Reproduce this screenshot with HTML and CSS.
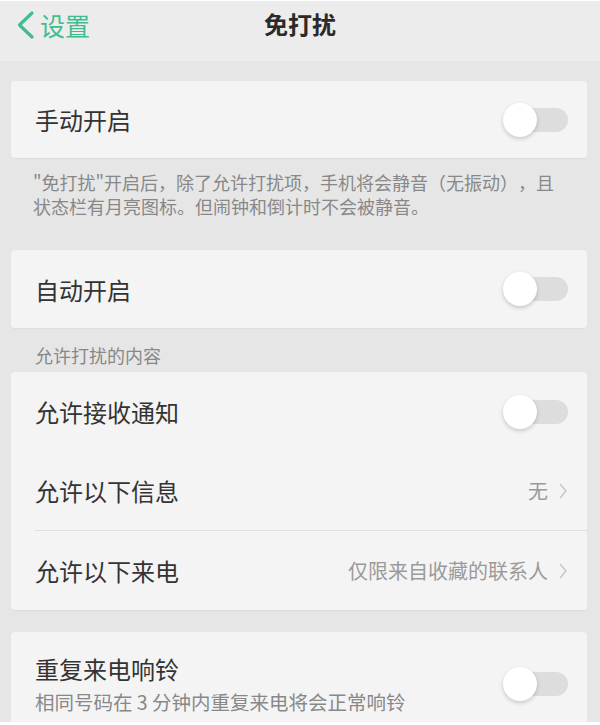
FILE: index.html
```html
<!DOCTYPE html>
<html lang="zh-CN">
<head>
    <meta charset="UTF-8">
    <title>免打扰</title>
    <link rel="stylesheet" href="styles.css">
</head>
<body>
    <div class="screen">
        <div class="nav">
            <a class="back">
                <svg width="20" height="28" viewBox="0 0 20 28"><polyline points="16,2 3.5,14 16,26" fill="none" stroke="#40bd8e" stroke-width="3.2" stroke-linecap="round" stroke-linejoin="round"/></svg>
                <span>设置</span>
            </a>
            <h1>免打扰</h1>
        </div>

        <div class="card">
            <div class="row">
                <span class="label">手动开启</span>
                <span class="switch"><span class="knob"></span></span>
            </div>
        </div>
        <p class="note">"免打扰"开启后，除了允许打扰项，手机将会静音（无振动），且<br>状态栏有月亮图标。但闹钟和倒计时不会被静音。</p>

        <div class="card">
            <div class="row row-auto">
                <span class="label">自动开启</span>
                <span class="switch"><span class="knob"></span></span>
            </div>
        </div>
        <p class="section">允许打扰的内容</p>

        <div class="card">
            <div class="row row-list">
                <span class="label">允许接收通知</span>
                <span class="switch"><span class="knob"></span></span>
            </div>
            <div class="row row-list">
                <span class="label">允许以下信息</span>
                <span class="value">无<svg class="arrow" width="10" height="20" viewBox="0 0 10 20"><polyline points="2,3 8,10 2,17" fill="none" stroke="#c6c6c6" stroke-width="1.4"/></svg></span>
            </div>
            <div class="row row-list divided">
                <span class="label">允许以下来电</span>
                <span class="value">仅限来自收藏的联系人<svg class="arrow" width="10" height="20" viewBox="0 0 10 20"><polyline points="2,3 8,10 2,17" fill="none" stroke="#c6c6c6" stroke-width="1.4"/></svg></span>
            </div>
        </div>

        <div class="card card-last">
            <div class="row row-tall">
                <div class="texts">
                    <span class="label">重复来电响铃</span>
                    <span class="sub">相同号码在 3 分钟内重复来电将会正常响铃</span>
                </div>
                <span class="switch"><span class="knob"></span></span>
            </div>
        </div>
    </div>
</body>
</html>
```

FILE: styles.css
```css
body { margin: 1px 0 0; background: #fff; font-family: "Noto Sans CJK SC", "Noto Sans", sans-serif; text-spacing-trim: space-all; }
.screen { height: 721px; overflow: hidden; background: #e6e6e6; }

.nav { height: 60px; background: #ececec; position: relative; display: flex; justify-content: center; padding-top: 7px; box-sizing: border-box; }
.nav h1 { margin: 0; font-size: 24px; line-height: 32px; font-weight: bold; color: #2a2a2a; }
.back { position: absolute; left: 16px; top: 9px; display: flex; align-items: center; gap: 4px; color: #40bd8e; font-size: 25px; line-height: 30px; }

.card { background: #f4f4f4; margin: 0 13px 0 11px; border-radius: 4px; box-shadow: 0 1px 1px rgba(0,0,0,0.04); }
.nav + .card { margin-top: 20px; }
.row { display: flex; align-items: center; justify-content: space-between; height: 77px; padding: 0 19px 0 24px; }
.row-auto { height: 78px; }
.row-list { height: 79px; }
.divided { border-top: 1px solid #dedede; margin-left: 24px; padding-left: 0; }
.label { font-size: 24px; color: #333; }

.switch { position: relative; width: 63px; height: 24px; border-radius: 12px; background: #dddddd; }
.knob { position: absolute; left: -2px; top: -5px; width: 34px; height: 34px; border-radius: 50%; background: #fff; box-shadow: 0 2px 4px rgba(0,0,0,0.18); }

.value { display: flex; align-items: center; gap: 10px; font-size: 20px; color: #9a9a9a; }

.note { margin: 0; padding: 12px 20px 32px 33px; font-size: 18px; line-height: 24px; color: #888; }
.section { margin: 0; padding: 15px 20px 5px 35px; font-size: 18px; line-height: 24px; color: #888; }

.card-last { margin-top: 22px; }
.row-tall { height: auto; padding-top: 22px; padding-bottom: 24px; }
.texts { display: flex; flex-direction: column; }
.texts .label { line-height: 30px; }
.sub { margin-top: 6px; font-size: 19.5px; line-height: 24px; color: #888; }
```
